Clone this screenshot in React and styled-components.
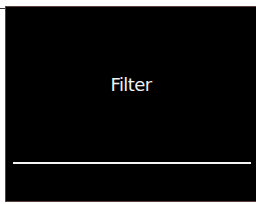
import React from 'react'
import styled, { createGlobalStyle } from 'styled-components'

const GlobalStyle = createGlobalStyle`
  html, body {
    margin: 0;
    padding: 0;
    background: #ffffff;
  }
`;

const Page = styled.div`
  display: flex;
  align-items: flex-start;
  padding-top: 6px;
  width: 256px;
  height: 204px;
  box-sizing: border-box;
  overflow: hidden;
`;

const Stub = styled.div`
  width: 5px;
  height: 1px;
  margin-top: 2px;
  background: #3a3a3a;
  flex-shrink: 0;
`;

const Panel = styled.div`
  display: flex;
  flex-direction: column;
  width: 252px;
  height: 196px;
  box-sizing: border-box;
  border: 1px solid #5a4038;
  background: #000000;
  flex-shrink: 0;
`;

const Title = styled.div`
  margin-top: 65px;
  height: 26px;
  line-height: 26px;
  text-align: center;
  color: #f2f2f2;
  font-family: "DejaVu Sans", sans-serif;
  font-size: 18px;
  letter-spacing: -0.6px;
`;

const Rule = styled.div`
  margin: 64px 5px 0 7px;
  height: 2px;
  background: #f4f4f4;
`;

export default function App() {
  return (
    <>
      <GlobalStyle />
      <Page>
        <Stub />
        <Panel>
          <Title>Filter</Title>
          <Rule />
        </Panel>
      </Page>
    </>
  );
}
